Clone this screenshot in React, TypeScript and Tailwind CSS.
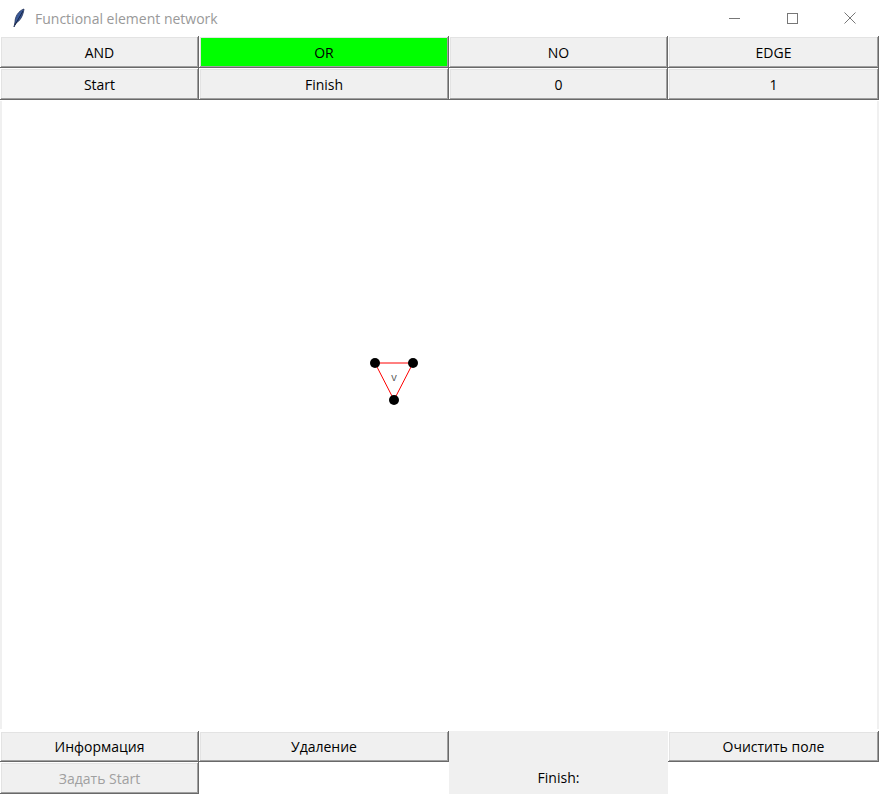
const raised =
  'shadow-[inset_-1px_-1px_#696969,inset_1px_1px_#ffffff,inset_-2px_-2px_#a0a0a0,inset_2px_2px_#e3e3e3]';

function TkButton({ label, active, disabled }: { label: string; active?: boolean; disabled?: boolean }) {
  return (
    <div
      className={`flex items-center justify-center text-[14px] ${raised} ${
        active ? 'bg-[#00ff00] shadow-[inset_-1px_-1px_#000000,inset_1px_1px_#00ff00,inset_-2px_-2px_#006400]' : 'bg-[#f0f0f0]'
      } ${disabled ? 'text-[#a0a0a0]' : 'text-black'}`}
    >
      {label}
    </div>
  );
}

function TitleBar() {
  return (
    <div className="flex h-[36px] items-center bg-white">
      <svg className="ml-[12px] mr-[9px]" width="14" height="20" viewBox="0 0 14 20">
        <path d="M12 1 C6 3 3 9 3 14 L2 19 L4 15 C8 13 11 8 12 1 Z" fill="#3a5a9a" stroke="#1f2f55" strokeWidth="0.8" />
        <path d="M11 3 L3 17" stroke="#0b1530" strokeWidth="0.8" />
      </svg>
      <span className="text-[14px] text-[#999999]">Functional element network</span>
      <div className="ml-auto flex h-full items-center">
        <div className="flex h-full w-[58px] items-center justify-center">
          <div className="h-px w-[11px] bg-[#777]" />
        </div>
        <div className="flex h-full w-[58px] items-center justify-center">
          <div className="h-[11px] w-[11px] border border-[#777]" />
        </div>
        <div className="flex h-full w-[58px] items-center justify-center">
          <svg width="12" height="12" viewBox="0 0 12 12">
            <path d="M0.5 0.5 L11.5 11.5 M11.5 0.5 L0.5 11.5" stroke="#777" strokeWidth="1" />
          </svg>
        </div>
      </div>
    </div>
  );
}

function Network() {
  return (
    <svg className="absolute left-0 top-0" width="875" height="628">
      <polygon points="373,262 411,262 392,299" fill="none" stroke="#ff0000" strokeWidth="1" />
      <circle cx="373" cy="262" r="5" fill="#000" />
      <circle cx="411" cy="262" r="5" fill="#000" />
      <circle cx="392" cy="299" r="5" fill="#000" />
      <text x="392" y="280" textAnchor="middle" fontSize="11" fill="#555" fontFamily="'Open Sans', sans-serif">
        v
      </text>
    </svg>
  );
}

export default function App() {
  return (
    <div className="flex h-[794px] w-[879px] flex-col overflow-hidden bg-white font-['Open_Sans',sans-serif]">
      <TitleBar />
      <div className="grid h-[64px] grid-cols-[199px_250px_219px_211px] grid-rows-2">
        <TkButton label="AND" />
        <TkButton label="OR" active />
        <TkButton label="NO" />
        <TkButton label="EDGE" />
        <TkButton label="Start" />
        <TkButton label="Finish" />
        <TkButton label="0" />
        <TkButton label="1" />
      </div>
      <div className="relative mt-px h-[628px] border-x-2 border-[#f0f0f0] bg-white">
        <Network />
      </div>
      <div className="mt-[2px] grid h-[63px] grid-cols-[199px_250px_219px_211px] grid-rows-[31px_32px]">
        <TkButton label="Информация" />
        <TkButton label="Удаление" />
        <div className="row-span-2 flex items-end justify-center bg-[#f0f0f0] pb-[6px] text-[14px] text-black">
          Finish:
        </div>
        <TkButton label="Очистить поле" />
        <TkButton label="Задать Start" disabled />
        <div className="bg-white" />
        <div className="bg-white" />
      </div>
    </div>
  );
}
